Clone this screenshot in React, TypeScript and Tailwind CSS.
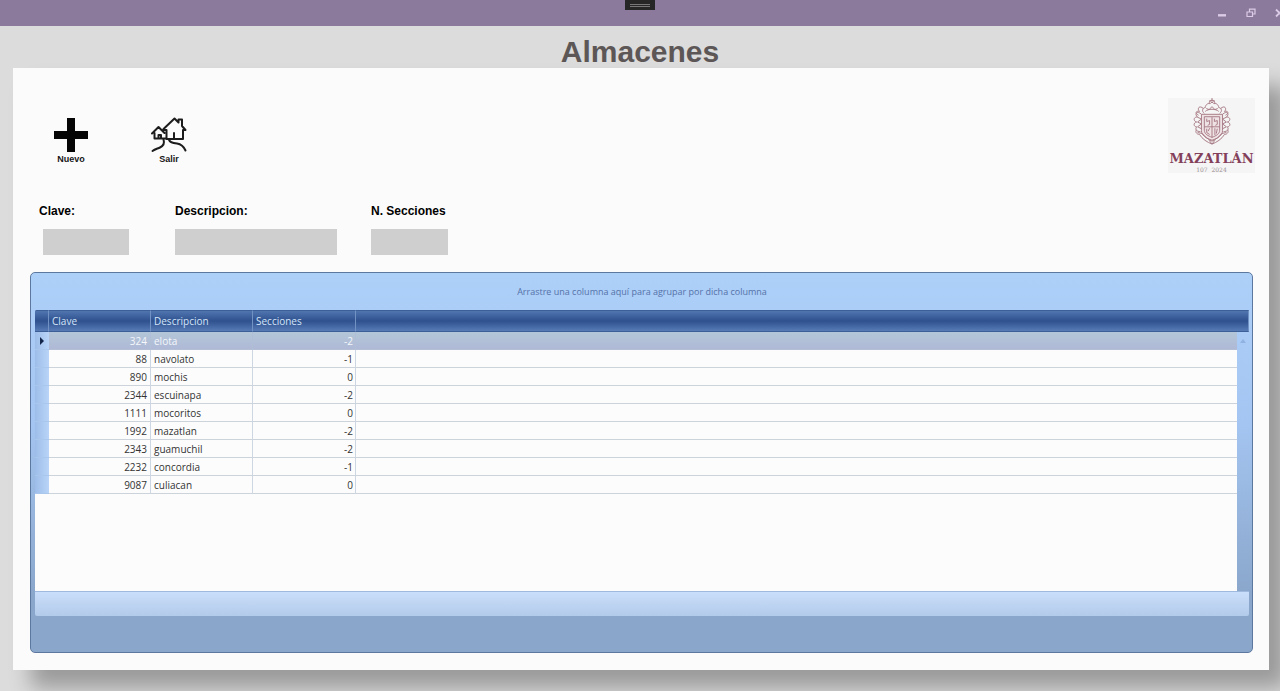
import React from "react";

type Almacen = { clave: number; descripcion: string; secciones: number };

const almacenes: Almacen[] = [
  { clave: 324, descripcion: "elota", secciones: -2 },
  { clave: 88, descripcion: "navolato", secciones: -1 },
  { clave: 890, descripcion: "mochis", secciones: 0 },
  { clave: 2344, descripcion: "escuinapa", secciones: -2 },
  { clave: 1111, descripcion: "mocoritos", secciones: 0 },
  { clave: 1992, descripcion: "mazatlan", secciones: -2 },
  { clave: 2343, descripcion: "guamuchil", secciones: -2 },
  { clave: 2232, descripcion: "concordia", secciones: -1 },
  { clave: 9087, descripcion: "culiacan", secciones: 0 },
];

function TitleBar() {
  return (
    <header className="flex h-[26px] shrink-0 items-start bg-[#8b7a9b]">
      <div className="flex-1" />
      <div className="flex h-[10px] w-[30px] items-center justify-center bg-[#262626]">
        <div className="h-[3px] w-5 border-y border-[#77777a]" />
      </div>
      <div className="flex h-[26px] flex-1 items-center justify-end gap-[19px] overflow-hidden text-[#dccbe6]">
        <button type="button" aria-label="Minimizar">
          <svg width="10" height="10" viewBox="0 0 10 10">
            <path d="M1 7.3h8" stroke="currentColor" strokeWidth="2.4" />
          </svg>
        </button>
        <button type="button" aria-label="Restaurar">
          <svg width="10" height="10" viewBox="0 0 10 10" fill="none" stroke="currentColor">
            <path d="M1 4h5.5v4.5H1zM3.5 4V1.2H9V6H6.5" strokeWidth="1.2" />
          </svg>
        </button>
        <button type="button" aria-label="Cerrar" className="-mr-1">
          <svg width="9" height="10" viewBox="0 0 9 10">
            <path d="M1 1.5l7 7M8 1.5l-7 7" stroke="currentColor" strokeWidth="1.8" />
          </svg>
        </button>
      </div>
    </header>
  );
}

function PlusIcon() {
  return (
    <svg width="36" height="36" viewBox="0 0 36 36">
      <path d="M14 1h8v13h13v8H22v13h-8V22H1v-8h13z" fill="#050505" />
    </svg>
  );
}

function HousesIcon() {
  return (
    <svg width="36" height="36" viewBox="0 0 36 36" fill="none" stroke="#1c1c1c" strokeWidth="2" strokeLinejoin="round" strokeLinecap="round">
      <path d="M12.500 12L23.500 1.500l4 4V2.500h3.500v6.500l3.500 4H32v9H15.500" />
      <path d="M1 16.500l6.500-6.500 6 6M3.500 16v5.500H15.500V13H12M7.500 21v-3H10v3M23 21.500V16" />
      <path d="M12.500 22.500c1.500 4.500-.5 6.500-3.500 8-2.500 1.200-5 1.500-7.500 3.500M18 22c0 3.500 4 4 8 4.500 4 .6 7 3.500 8.500 7" />
    </svg>
  );
}

function MazatlanLogo() {
  return (
    <div className="flex h-[75px] w-[87px] flex-col items-center bg-[#f5f5f5] font-['DejaVu_Serif','Liberation_Serif',serif]">
      <svg width="42" height="50" viewBox="0 0 42 50" fill="none" stroke="#a77a85" strokeWidth="1">
        <path d="M10 17h22v17c0 5-5 8-11 10-6-2-11-5-11-10z" fill="#efe2e5" />
        <path d="M13 19.500h16v14c0 4-4 6-8 7.500-4-1.500-8-3.500-8-7.500z" />
        <path d="M21 20v21M13 30h16M15.500 21.500v3l3-1v4l-2 1M23.500 21.500v3l3-1v4l-2 1M15.500 32v4l3 2M18.500 31.500l-1.500 3M24 31.500v7M26.500 32l-1 5" />
        <path d="M13 16c-3-2-2-6 1-6 0-3 3-5 5-4 1-2 3-2 4 0 2-1 5 1 5 4 3 0 4 4 1 6M14 14c3-3 11-3 14 0M15 11l3 1 3-3 3 3 3-1M18 6c0-5 6-5 6 0M21 0v3M18 3h6" />
        <path d="M10 17c-4-4-8-1-4 3-4-1-5 4-1 5-4 1-3 5 0 5-2 3 0 5 4 5M6 20l4 2-4 3 4 2-4 3 4 2M32 17c4-4 8-1 4 3 4-1 5 4 1 5 4 1 3 5 0 5 2 3 0 5-4 5M36 20l-4 2 4 3-4 2 4 3-4 2" />
        <path d="M12 11c-4-4-7 0-4 3-4-1-5 2-1 4M30 11c4-4 7 0 4 3 4-1 5 2 1 4" />
        <path d="M5 33c-2 2 0 5 3 5 3 5 8 8 13 10 5-2 10-5 13-10 3 0 5-3 3-5M6 36l5 1c3 4 6 6 10 8 4-2 7-4 10-8l5-1M18 44l3 4 3-4" />
      </svg>
      <div className="mt-1 text-[13px] leading-[18px] font-bold text-[#83405a]">MAZATLÁN</div>
      <div className="-mt-px text-[6px] leading-[6px] whitespace-pre text-[#9b8f92]">107  2024</div>
    </div>
  );
}

function Toolbar() {
  const boton = "flex w-[60px] flex-col items-center text-[9px] leading-3 font-bold text-[#161616]";
  return (
    <div className="flex items-start pl-7">
      <button type="button" className={boton + " mt-[19px]"}>
        <PlusIcon />
        Nuevo
      </button>
      <button type="button" className={boton + " mt-[19px] ml-[38px]"}>
        <HousesIcon />
        Salir
      </button>
      <div className="ml-auto mr-[14px]">
        <MazatlanLogo />
      </div>
    </div>
  );
}

function Filtros() {
  const etiqueta = "text-xs leading-4 font-bold text-black";
  const caja = "h-[26px] bg-[#cfcfcf] px-1 text-xs outline-none";
  return (
    <form className="mt-[30px] flex pl-[26px]">
      <div className="flex w-[136px] flex-col gap-[10px]">
        <label htmlFor="clave" className={etiqueta}>Clave:</label>
        <input id="clave" className={caja + " ml-1 w-[86px]"} />
      </div>
      <div className="flex w-[196px] flex-col gap-[10px]">
        <label htmlFor="descripcion" className={etiqueta}>Descripcion:</label>
        <input id="descripcion" className={caja + " w-[162px]"} />
      </div>
      <div className="flex flex-col gap-[10px]">
        <label htmlFor="secciones" className={etiqueta}>N. Secciones</label>
        <input id="secciones" className={caja + " w-[77px]"} />
      </div>
    </form>
  );
}

function Fila({ fila, activa }: { fila: Almacen; activa: boolean }) {
  const celda = activa
    ? "border-b border-[#b4bfd6] bg-linear-to-b from-[#b3c6d8] to-[#afb9d6] p-0 text-[#f4f7fb]"
    : "border-b border-[#cdd3da] bg-[#fcfcfc] p-0";
  const divisor = activa ? " border-r border-r-[#b1bfd6]" : " border-r border-r-[#cdd7e3]";
  return (
    <tr className="h-[18px]">
      <td className="border-b border-[#a9c6ec] bg-linear-to-r from-[#9dbde9] to-[#b9d4f7] p-0">
        {activa && (
          <svg className="ml-1 block" width="6" height="8" viewBox="0 0 6 8">
            <path d="M1 0l4 4-4 4z" fill="#14254a" />
          </svg>
        )}
      </td>
      <td className={celda + divisor + " pr-[3px] text-right"}>{fila.clave}</td>
      <td className={celda + divisor + " pl-[3px]"}>{fila.descripcion}</td>
      <td className={celda + divisor + " pr-[2px] text-right"}>{fila.secciones}</td>
      <td className={celda} />
      <td className="p-0">
        {activa && (
          <svg className="mx-auto block" width="6" height="4" viewBox="0 0 6 4">
            <path d="M0 4l3-4 3 4z" fill="#8fb2e2" />
          </svg>
        )}
      </td>
    </tr>
  );
}

function Rejilla() {
  const titulo = "border-y border-r border-y-[#3c5f98] border-r-[#7292c4] p-0 pl-[3px] text-left font-normal";
  return (
    <section className="mt-[17px] mr-4 mb-[17px] ml-[17px] flex flex-1 flex-col rounded-[5px] border border-[#5c789f] bg-linear-to-b from-[#add0f9] via-[#a4c5f1] via-40% to-[#8aa6cb] to-85% pr-[3px] pb-9 pl-1 font-['Open_Sans','Noto_Sans',sans-serif]">
      <p className="flex h-[37px] items-center justify-center text-[9px] text-[#5572a8]">
        Arrastre una columna aquí para agrupar por dicha columna
      </p>
      <table className="w-full table-fixed border-separate border-spacing-0 text-[10px] leading-[14px] text-[#333]">
        <colgroup>
          <col className="w-[14px]" />
          <col className="w-[102px]" />
          <col className="w-[102px]" />
          <col className="w-[103px]" />
          <col />
          <col className="w-[12px]" />
        </colgroup>
        <thead>
          <tr className="h-[22px] bg-linear-to-b from-[#5478b2] via-[#2f528f] to-[#5b7fb9] text-[#d5e5fa]">
            <th className={titulo + " rounded-tl-xs"} />
            <th className={titulo}>Clave</th>
            <th className={titulo}>Descripcion</th>
            <th className={titulo}>Secciones</th>
            <th colSpan={2} className={titulo} />
          </tr>
        </thead>
        <tbody>
          {almacenes.map((fila, i) => (
            <Fila key={fila.clave} fila={fila} activa={i === 0} />
          ))}
        </tbody>
      </table>
      <div className="mr-[12px] flex-1 bg-[#fcfcfc]" />
      <div className="h-[25px] rounded-b-xs border-t border-[#9eb9dd] bg-linear-to-b from-[#c9defa] to-[#b3cbea]" />
    </section>
  );
}

export default function App() {
  return (
    <div className="flex min-h-screen flex-col overflow-hidden bg-[#dcdcdc] font-['Liberation_Sans',Arial,sans-serif]">
      <TitleBar />
      <h1 className="flex h-[42px] items-center justify-center pt-[9px] text-[30px] font-bold text-[#5c5756]">Almacenes</h1>
      <main className="mr-[11px] mb-[21px] ml-[13px] flex flex-1 flex-col bg-[#fbfbfb] pt-[30px] shadow-[18px_18px_20px_rgba(0,0,0,0.3)]">
        <Toolbar />
        <Filtros />
        <Rejilla />
      </main>
    </div>
  );
}
